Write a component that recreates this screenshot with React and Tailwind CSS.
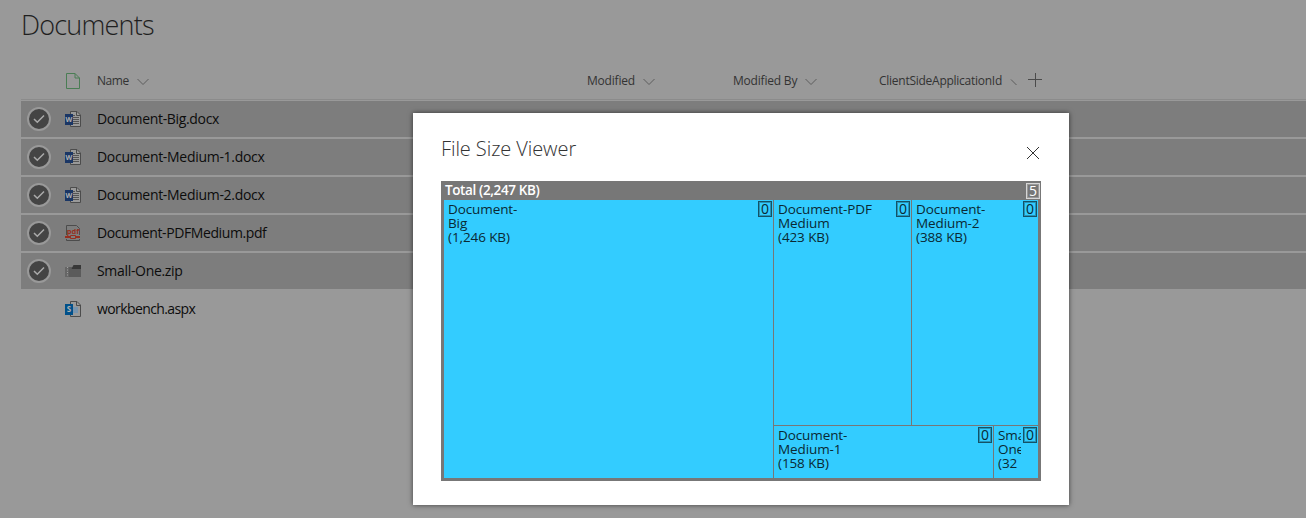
import React from "react";

function Chevron({ half = false }) {
  return (
    <svg width="12" height="8" viewBox="0 0 12 8" fill="none" stroke="#5c5c5c" className="mt-0.5 block shrink-0">
      <path d={half ? "M1 1.5l5.500 5.500" : "M.5 1L6 6.500L11.500 1"} />
    </svg>
  );
}

function DocIcon() {
  return (
    <svg width="14" height="16" viewBox="0 0 14 16" fill="none" stroke="#4a7d54" className="block">
      <path d="M.5 .5H9L13.500 5V15.500H.5ZM9 .5V5H13.500" />
    </svg>
  );
}

function OfficeIcon({ color, letter }) {
  return (
    <svg width="16" height="16" viewBox="0 0 16 16" className="block">
      <path d="M5.500 .5H12L15.500 4V15.500H5.500Z" fill="#999" stroke="#4c4c4c" />
      <path d="M11.500 .5V4.500H15.500" fill="none" stroke="#4c4c4c" />
      {letter === "W" ? (
        <path d="M8 4.500h2M8 6.500h6M8 8.500h6M8 10.500h6M8 12.500h6" stroke="#555" />
      ) : (
        <path d="M7 6h6v6H7z" fill="#7794ae" />
      )}
      <path d="M0 3H8V14H0Z" fill={color} />
      <text x="4" y="11" textAnchor="middle" fontSize={letter === "W" ? "7" : "8"} fontWeight="700" fill="#b0b0b0">
        {letter}
      </text>
    </svg>
  );
}

function PdfIcon() {
  return (
    <svg width="16" height="16" viewBox="0 0 16 16" fill="none" className="block">
      <path d="M1.500 10V.5H11.500L14.500 3.500V10M1.500 14V15.500H14.500V14" stroke="#4c4c4c" />
      <text x="8" y="8.500" textAnchor="middle" fontSize="7.500" fontWeight="700" fill="#962f20">pdf</text>
      <path d="M0 11h5v2H0zM10 11h5v2h-5z" fill="#962f20" />
      <path d="M5.500 10.500h5v3h-5z" stroke="#962f20" />
    </svg>
  );
}

function ZipIcon() {
  return (
    <svg width="16" height="16" viewBox="0 0 16 16" className="block">
      <path d="M0 4H16V14H0Z" fill="#5b5b5b" />
      <path d="M0 4H4V14H0Z" fill="#666" />
      <path d="M8.500 2H16V6H6.500Z" fill="#383838" />
      <path d="M2.500 4V13" stroke="#a0a0a0" strokeDasharray="1 1.500" />
    </svg>
  );
}

function Check() {
  return (
    <svg width="24" height="24" viewBox="0 0 24 24" fill="none" className="block">
      <circle cx="12" cy="12" r="11" fill="#444" stroke="#999" strokeWidth="2" />
      <path d="M7 12L10.300 15.300L17 8.500" stroke="#aaa" strokeWidth="1.500" />
    </svg>
  );
}

const word = <OfficeIcon color="#1a3665" letter="W" />;

const files = [
  { name: "Document-Big.docx", icon: word, tracking: "tracking-[-0.33px]" },
  { name: "Document-Medium-1.docx", icon: word, tracking: "tracking-[-0.3px]" },
  { name: "Document-Medium-2.docx", icon: word, tracking: "tracking-[-0.3px]" },
  { name: "Document-PDFMedium.pdf", icon: <PdfIcon />, tracking: "tracking-[-0.4px]" },
  { name: "Small-One.zip", icon: <ZipIcon />, tracking: "tracking-[-0.32px]" },
  { name: "workbench.aspx", icon: <OfficeIcon color="#00508a" letter="S" />, tracking: "tracking-[-0.6px]" },
];

function Row({ file, selected }) {
  return (
    <div className={`flex h-9 items-center ${selected ? "bg-[#7d7d7d]" : ""}`}>
      <div className="w-11 pl-1.5">{selected && <Check />}</div>
      <div className="w-8">{file.icon}</div>
      <span className={`pb-0.5 whitespace-nowrap text-[14px] text-[#0c0c0c] ${file.tracking}`}>{file.name}</span>
    </div>
  );
}

function Column({ label, className, half, tracking = "tracking-[-0.2px]" }) {
  return (
    <div className={`flex shrink-0 items-center gap-2 text-[12px] text-[#333] ${className}`}>
      <span className={`whitespace-nowrap ${tracking}`}>{label}</span>
      <Chevron half={half} />
    </div>
  );
}

function Badge({ children, light = false }) {
  return (
    <span
      className={`flex h-4 w-3.5 shrink-0 items-center justify-center border text-[14px] leading-none ${
        light
          ? "border-[#d6d6d6] text-white shadow-[inset_0_0_0_1px_rgba(255,255,255,0.25)]"
          : "border-[#145266] text-[#0a2933] shadow-[inset_0_0_0_1px_rgba(10,41,51,0.35)]"
      }`}
    >
      {children}
    </span>
  );
}

function Cell({ lines, className }) {
  return (
    <div className={`flex items-start justify-between overflow-hidden bg-[#33ccff] pt-px pr-px pl-1 ${className}`}>
      <div className="mr-0.5 min-w-0 overflow-hidden pt-px pb-1 text-[13.5px] leading-[14px] tracking-[-0.1px] text-[#0a2933]">
        {lines.map((l) => (
          <div key={l} className="whitespace-nowrap">{l}</div>
        ))}
      </div>
      <Badge>0</Badge>
    </div>
  );
}

function Dialog() {
  return (
    <section className="absolute top-[113px] left-[413px] h-[392px] w-[656px] bg-white px-7 pt-6 shadow-[0_0_5px_rgba(0,0,0,0.6)]">
      <header className="flex h-11 items-start justify-between">
        <h2 className="text-[20px] leading-6 font-light tracking-[-0.08px] text-[#333]">File Size Viewer</h2>
        <svg width="14" height="14" viewBox="0 0 14 14" fill="none" stroke="#333" className="mt-[9px] mr-px block">
          <path d="M1 1L13 13M13 1L1 13" />
        </svg>
      </header>
      <div className="flex h-[300px] flex-col bg-[#777] px-[3px] pb-[3px]">
        <div className="-mr-0.5 flex h-[19px] shrink-0 items-center justify-between pl-px text-white">
          <span className="text-[13.5px] leading-none font-semibold tracking-[-0.38px]">Total (2,247 KB)</span>
          <Badge light>5</Badge>
        </div>
        <div className="flex h-[278px] gap-px">
          <Cell className="w-[329px]" lines={["Document-", "Big", "(1,246 KB)"]} />
          <div className="flex w-[264px] flex-col gap-px">
            <div className="flex h-[225px] gap-px">
              <Cell className="w-[137px]" lines={["Document-PDF", "Medium", "(423 KB)"]} />
              <Cell className="w-[126px]" lines={["Document-", "Medium-2", "(388 KB)"]} />
            </div>
            <div className="flex h-[52px] gap-px">
              <Cell className="w-[219px]" lines={["Document-", "Medium-1", "(158 KB)"]} />
              <Cell className="w-[44px]" lines={["Small-", "One", "(32"]} />
            </div>
          </div>
        </div>
      </div>
    </section>
  );
}

export default function App() {
  return (
    <main className="relative h-[518px] w-full overflow-hidden bg-[#999] pl-[21px] font-['Open_Sans','Noto_Sans',sans-serif]">
      <h1 className="h-[61px] pt-[7px] text-[27px] leading-9 font-light tracking-[-0.8px] text-[#1f1f1f]">Documents</h1>
      <div className="flex h-[39px] items-center border-b border-[#8b8b8b] pt-0.5">
        <div className="w-[76px] pl-[45px]"><DocIcon /></div>
        <Column label="Name" className="w-[490px]" tracking="tracking-[-0.45px]" />
        <Column label="Modified" className="w-[146px]" />
        <Column label="Modified By" className="w-[146px]" />
        <Column label="ClientSideApplicationId" half className="w-[149px]" tracking="tracking-[-0.26px]" />
        <svg width="14" height="14" viewBox="0 0 14 14" stroke="#4b4b4b" className="-mt-0.5 block">
          <path d="M7.500 0V14M0 6.500H14" />
        </svg>
      </div>
      <div className="mt-px flex flex-col gap-0.5">
        {files.map((f, i) => <Row key={f.name} file={f} selected={i < 5} />)}
      </div>
      <Dialog />
    </main>
  );
}
